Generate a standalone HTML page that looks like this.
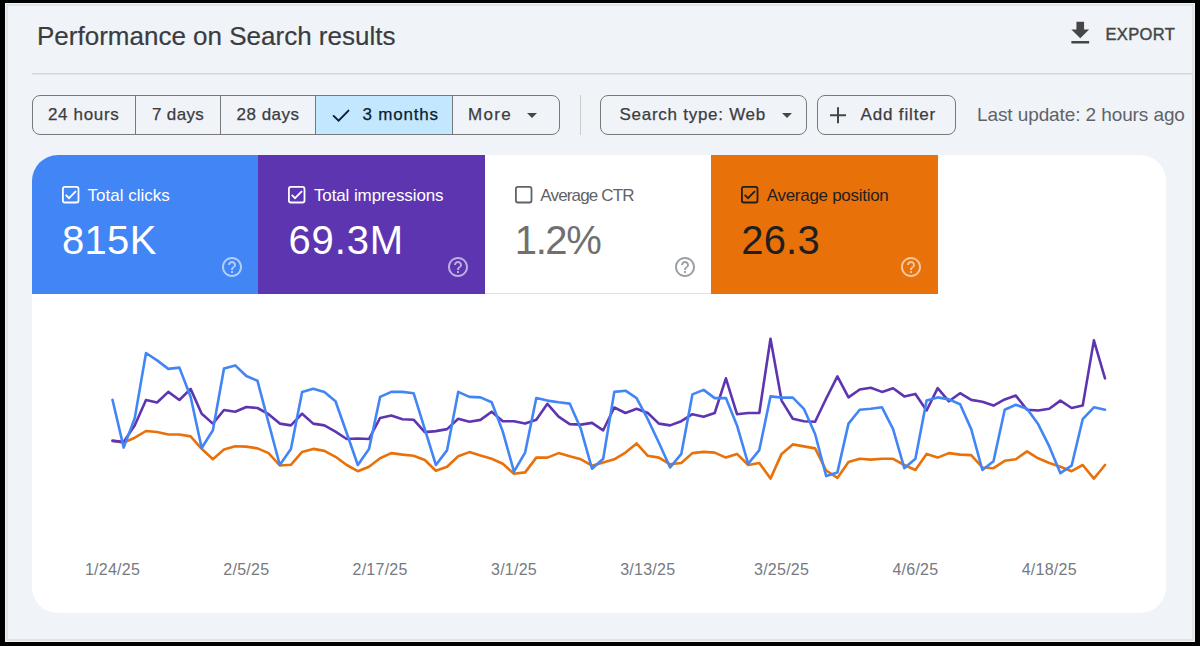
<!DOCTYPE html>
<html><head><meta charset="utf-8"><style>
*{box-sizing:border-box;margin:0;padding:0}
html,body{width:1200px;height:646px;overflow:hidden;background:#000;font-family:"Liberation Sans",sans-serif}
.frame{position:absolute;left:5px;top:3px;width:1190px;height:639px;background:#f2f2f2}
.inner{position:absolute;left:1px;top:1px;right:1px;bottom:1px;background:#f0f3f8;border:2px solid #e2e3e5}
.abs{position:absolute;white-space:nowrap;line-height:1}
.title{left:37px;font-size:26px;color:#3a3c3f;-webkit-text-stroke:0.2px #3a3c3f}
.export{left:1105.5px;font-size:16.5px;color:#444746;-webkit-text-stroke:0.45px #444746;letter-spacing:0.35px}
.hr{position:absolute;left:32px;top:73px;width:1161px;height:1px;background:#d2d5d9;box-shadow:0 1px 0 #e3e6ea}
.box{position:absolute;top:95px;height:40px;border:1px solid #79797b;border-radius:8px}
.sep{position:absolute;top:95px;width:1px;height:40px;background:#79797b}
.bt{position:absolute;top:106.1px;font-size:17px;line-height:1;color:#3c3c3f;-webkit-text-stroke:0.25px #3c3c3f;white-space:nowrap}
.vdiv{position:absolute;left:580px;top:95px;width:1px;height:40px;background:#c9cbcd}
.last{left:977px;top:104.5px;font-size:19px;color:#5f6368;letter-spacing:-0.1px}
.card{position:absolute;left:32px;top:155px;width:1134px;height:458px;background:#fff;border-radius:26px;overflow:hidden}
.m{position:absolute;top:0;width:227px;height:139px}
.m .cb{position:absolute;left:30px;top:31px;width:18px;height:18px}
.m .lbl{position:absolute;left:55.5px;top:32px;font-size:17px;line-height:1;white-space:nowrap}
.m .val{position:absolute;left:30px;top:65px;font-size:40px;line-height:1;white-space:nowrap}
.m .hq{position:absolute;left:188px;top:100px;width:24px;height:24px}
.xl{position:absolute;top:562px;width:120px;text-align:center;font-size:16px;line-height:1;color:#757a7f;letter-spacing:0.25px}
</style></head><body>
<div class="frame"><div class="inner"></div></div>
<div class="abs title" style="top:22.5px">Performance on Search results</div>
<svg class="abs" style="left:1065px;top:18px" width="30.5" height="30.5" viewBox="0 0 24 24"><path fill="#444746" d="M19 9h-4V3H9v6H5l7 7 7-7zM5 18v2h14v-2H5z"/></svg>
<div class="abs export" style="top:25.5px">EXPORT</div>
<div class="hr"></div>
<div style="position:absolute;left:315.5px;top:95px;width:137px;height:40px;background:#c2e7ff"></div>
<div class="box" style="left:32px;width:528px"></div>
<div class="sep" style="left:135px"></div>
<div class="sep" style="left:220px"></div>
<div class="sep" style="left:315px"></div>
<div class="sep" style="left:452px"></div>
<div class="bt" style="left:48px;letter-spacing:0.65px;">24 hours</div>
<div class="bt" style="left:152px;letter-spacing:0.34px;">7 days</div>
<div class="bt" style="left:236.5px;letter-spacing:0.5px;">28 days</div>
<svg class="abs" style="left:320px;top:100px" width="40" height="30" viewBox="320 100 40 30"><path fill="none" stroke="#0b1d30" stroke-width="1.9" stroke-linecap="round" d="M333.6 115.9L338.6 120.7L348.5 110.6"/></svg>
<div class="bt" style="left:362.5px;letter-spacing:0.8px;color:#0b1d30;-webkit-text-stroke:0.25px #0b1d30">3 months</div>
<div class="bt" style="left:468px;letter-spacing:1.3px;">More</div>
<div class="abs" style="left:527px;top:113px"><svg style="display:block" width="10" height="5" viewBox="0 0 10 5"><path fill="#444746" d="M0 0h10L5 5z"/></svg></div>
<div class="vdiv"></div>
<div class="box" style="left:600px;width:207px"></div>
<div class="bt" style="left:619.5px;letter-spacing:0.73px;">Search type: Web</div>
<div class="abs" style="left:782px;top:113px"><svg style="display:block" width="10" height="5" viewBox="0 0 10 5"><path fill="#444746" d="M0 0h10L5 5z"/></svg></div>
<div class="box" style="left:817px;width:139px"></div>
<svg class="abs" style="left:828.1px;top:104.5px" width="20" height="20" viewBox="0 0 20 20"><path fill="#444746" d="M9 2.2h2v16h-2zM2 9.2h16v2H2z"/></svg>
<div class="bt" style="left:860.5px;letter-spacing:0.85px;">Add filter</div>
<div class="abs last">Last update: 2 hours ago</div>
<div class="card">
 <div class="m" style="left:0;background:#4285f4;color:#fff"><div class="cb"><svg width="18" height="18" viewBox="0 0 18 18"><rect x="0.9" y="0.9" width="15.6" height="15.6" rx="2" fill="none" stroke="#fff" stroke-width="1.8"/><path d="M3.7 8.9 L7.0 12.2 L14.0 5.1" fill="none" stroke="#fff" stroke-width="1.8"/></svg></div><div class="lbl">Total clicks</div><div class="val" style="letter-spacing:0.3px">815K</div><div class="hq"><svg width="24" height="24" viewBox="0 0 24 24"><path fill="rgba(255,255,255,.6)" d="M11 18h2v-2h-2v2zm1-16C6.48 2 2 6.48 2 12s4.48 10 10 10 10-4.48 10-10S17.52 2 12 2zm0 18c-4.41 0-8-3.59-8-8s3.59-8 8-8 8 3.59 8 8-3.59 8-8 8zm0-14c-2.21 0-4 1.79-4 4h2c0-1.1.9-2 2-2s2 .9 2 2c0 2-3 1.75-3 5h2c0-2.25 3-2.5 3-5 0-2.21-1.79-4-4-4z"/></svg></div></div>
 <div class="m" style="left:226.4px;background:#5e35b1;color:#fff"><div class="cb"><svg width="18" height="18" viewBox="0 0 18 18"><rect x="0.9" y="0.9" width="15.6" height="15.6" rx="2" fill="none" stroke="#fff" stroke-width="1.8"/><path d="M3.7 8.9 L7.0 12.2 L14.0 5.1" fill="none" stroke="#fff" stroke-width="1.8"/></svg></div><div class="lbl" style="letter-spacing:-0.1px">Total impressions</div><div class="val" style="letter-spacing:0.9px">69.3M</div><div class="hq"><svg width="24" height="24" viewBox="0 0 24 24"><path fill="rgba(255,255,255,.6)" d="M11 18h2v-2h-2v2zm1-16C6.48 2 2 6.48 2 12s4.48 10 10 10 10-4.48 10-10S17.52 2 12 2zm0 18c-4.41 0-8-3.59-8-8s3.59-8 8-8 8 3.59 8 8-3.59 8-8 8zm0-14c-2.21 0-4 1.79-4 4h2c0-1.1.9-2 2-2s2 .9 2 2c0 2-3 1.75-3 5h2c0-2.25 3-2.5 3-5 0-2.21-1.79-4-4-4z"/></svg></div></div>
 <div class="m" style="left:452.8px;background:#fff;color:#5f6368;border-bottom:1px solid #e0e0e0"><div class="cb"><svg width="18" height="18" viewBox="0 0 18 18"><rect x="0.9" y="0.9" width="15.6" height="15.6" rx="2" fill="none" stroke="#5f6368" stroke-width="1.8"/></svg></div><div class="lbl" style="letter-spacing:-0.85px">Average CTR</div><div class="val" style="color:#707070;letter-spacing:-1.4px">1.2%</div><div class="hq"><svg width="24" height="24" viewBox="0 0 24 24"><path fill="#9aa0a6" d="M11 18h2v-2h-2v2zm1-16C6.48 2 2 6.48 2 12s4.48 10 10 10 10-4.48 10-10S17.52 2 12 2zm0 18c-4.41 0-8-3.59-8-8s3.59-8 8-8 8 3.59 8 8-3.59 8-8 8zm0-14c-2.21 0-4 1.79-4 4h2c0-1.1.9-2 2-2s2 .9 2 2c0 2-3 1.75-3 5h2c0-2.25 3-2.5 3-5 0-2.21-1.79-4-4-4z"/></svg></div></div>
 <div class="m" style="left:679.2px;width:227.3px;background:#e8710a;color:#1f1f1f"><div class="cb"><svg width="18" height="18" viewBox="0 0 18 18"><rect x="0.9" y="0.9" width="15.6" height="15.6" rx="2" fill="none" stroke="#1f1f1f" stroke-width="1.8"/><path d="M3.7 8.9 L7.0 12.2 L14.0 5.1" fill="none" stroke="#1f1f1f" stroke-width="1.8"/></svg></div><div class="lbl" style="letter-spacing:-0.28px">Average position</div><div class="val" style="letter-spacing:0.2px">26.3</div><div class="hq"><svg width="24" height="24" viewBox="0 0 24 24"><path fill="rgba(255,255,255,.6)" d="M11 18h2v-2h-2v2zm1-16C6.48 2 2 6.48 2 12s4.48 10 10 10 10-4.48 10-10S17.52 2 12 2zm0 18c-4.41 0-8-3.59-8-8s3.59-8 8-8 8 3.59 8 8-3.59 8-8 8zm0-14c-2.21 0-4 1.79-4 4h2c0-1.1.9-2 2-2s2 .9 2 2c0 2-3 1.75-3 5h2c0-2.25 3-2.5 3-5 0-2.21-1.79-4-4-4z"/></svg></div></div>
</div>
<svg class="abs" style="left:0;top:0" width="1200" height="646" viewBox="0 0 1200 646" fill="none" stroke-width="2.6" stroke-linejoin="round" stroke-linecap="round">
 <path stroke="#e8710a" d="M112.5,440.6 L123.7,442.6 L134.8,437.7 L146.0,431.0 L157.1,432.0 L168.3,434.5 L179.4,434.5 L190.6,436.4 L201.7,448.8 L212.9,459.2 L224.0,449.6 L235.2,446.3 L246.3,446.6 L257.5,448.4 L268.6,453.1 L279.8,465.5 L290.9,464.8 L302.1,451.9 L313.2,448.9 L324.4,450.9 L335.5,456.8 L346.7,465.0 L357.8,471.2 L369.0,466.7 L380.1,458.3 L391.3,453.1 L402.5,454.6 L413.6,455.8 L424.8,460.0 L435.9,470.7 L447.1,466.7 L458.2,456.3 L469.4,452.1 L480.5,455.6 L491.7,458.8 L502.8,463.8 L514.0,473.7 L525.1,472.4 L536.3,457.6 L547.4,457.6 L558.6,453.1 L569.7,456.3 L580.9,459.3 L592.0,465.7 L603.2,462.5 L614.3,459.3 L625.5,452.6 L636.6,443.4 L647.8,455.8 L658.9,457.6 L670.1,464.3 L681.3,463.0 L692.4,453.1 L703.6,451.9 L714.7,452.6 L725.9,457.6 L737.0,453.9 L748.2,465.0 L759.3,463.0 L770.5,478.6 L781.6,453.9 L792.8,444.4 L803.9,446.4 L815.1,448.4 L826.2,470.5 L837.4,477.9 L848.5,462.0 L859.7,458.8 L870.8,459.6 L882.0,458.8 L893.1,458.8 L904.3,465.0 L915.4,470.0 L926.6,453.9 L937.7,457.6 L948.9,453.1 L960.1,454.6 L971.2,455.1 L982.4,467.5 L993.5,468.2 L1004.7,460.8 L1015.8,459.3 L1027.0,451.4 L1038.1,458.3 L1049.3,463.0 L1060.4,466.7 L1071.6,471.2 L1082.7,465.0 L1093.9,478.6 L1105.0,465.0"/>
 <path stroke="#5e35b1" d="M112.5,440.9 L123.7,441.9 L134.8,425.3 L146.0,400.0 L157.1,402.5 L168.3,391.9 L179.4,400.0 L190.6,388.9 L201.7,413.7 L212.9,423.6 L224.0,410.0 L235.2,411.7 L246.3,407.0 L257.5,408.0 L268.6,414.2 L279.8,423.6 L290.9,425.4 L302.1,413.7 L313.2,423.6 L324.4,425.4 L335.5,431.6 L346.7,439.0 L357.8,438.5 L369.0,439.0 L380.1,417.9 L391.3,415.5 L402.5,419.2 L413.6,419.7 L424.8,432.1 L435.9,431.1 L447.1,429.1 L458.2,418.7 L469.4,421.7 L480.5,419.9 L491.7,411.7 L502.8,421.2 L514.0,421.2 L525.1,423.6 L536.3,419.7 L547.4,403.8 L558.6,416.7 L569.7,424.1 L580.9,424.6 L592.0,422.9 L603.2,430.3 L614.3,407.5 L625.5,413.0 L636.6,408.8 L647.8,413.0 L658.9,423.6 L670.1,425.4 L681.3,421.2 L692.4,414.2 L703.6,416.7 L714.7,413.0 L725.9,378.3 L737.0,414.2 L748.2,413.0 L759.3,413.0 L770.5,338.7 L781.6,400.6 L792.8,418.7 L803.9,421.2 L815.1,421.7 L826.2,398.5 L837.4,376.3 L848.5,397.4 L859.7,389.5 L870.8,387.7 L882.0,391.9 L893.1,388.2 L904.3,396.4 L915.4,393.9 L926.6,410.5 L937.7,388.2 L948.9,401.3 L960.1,393.2 L971.2,399.9 L982.4,401.8 L993.5,405.6 L1004.7,399.4 L1015.8,395.6 L1027.0,409.8 L1038.1,410.5 L1049.3,408.8 L1060.4,400.6 L1071.6,408.0 L1082.7,405.6 L1093.9,340.4 L1105.0,378.3"/>
 <path stroke="#4285f4" d="M112.5,399.8 L123.7,447.6 L134.8,417.9 L146.0,353.0 L157.1,360.4 L168.3,368.9 L179.4,367.6 L190.6,396.8 L201.7,448.0 L212.9,430.2 L224.0,368.4 L235.2,365.4 L246.3,376.0 L257.5,380.8 L268.6,422.9 L279.8,465.0 L290.9,448.9 L302.1,391.9 L313.2,388.7 L324.4,391.9 L335.5,401.3 L346.7,433.0 L357.8,465.0 L369.0,448.9 L380.1,396.9 L391.3,391.9 L402.5,391.9 L413.6,393.2 L424.8,429.1 L435.9,465.0 L447.1,450.1 L458.2,391.9 L469.4,396.9 L480.5,397.4 L491.7,402.3 L502.8,431.6 L514.0,471.7 L525.1,452.6 L536.3,398.1 L547.4,400.6 L558.6,402.3 L569.7,403.6 L580.9,429.1 L592.0,468.7 L603.2,458.8 L614.3,391.9 L625.5,390.7 L636.6,398.1 L647.8,419.2 L658.9,442.7 L670.1,467.5 L681.3,453.9 L692.4,394.4 L703.6,389.9 L714.7,398.1 L725.9,398.1 L737.0,425.4 L748.2,463.8 L759.3,450.1 L770.5,396.4 L781.6,397.6 L792.8,397.6 L803.9,408.8 L815.1,434.0 L826.2,476.1 L837.4,472.4 L848.5,423.6 L859.7,409.8 L870.8,408.8 L882.0,407.3 L893.1,429.1 L904.3,468.2 L915.4,458.8 L926.6,400.6 L937.7,397.4 L948.9,399.4 L960.1,404.3 L971.2,429.1 L982.4,470.0 L993.5,461.3 L1004.7,409.8 L1015.8,404.8 L1027.0,408.8 L1038.1,424.1 L1049.3,446.4 L1060.4,473.2 L1071.6,465.7 L1082.7,419.2 L1093.9,407.3 L1105.0,409.8"/>
</svg>
<div class="xl" style="left:52.5px">1/24/25</div><div class="xl" style="left:186.3px">2/5/25</div><div class="xl" style="left:320.1px">2/17/25</div><div class="xl" style="left:454.0px">3/1/25</div><div class="xl" style="left:587.8px">3/13/25</div><div class="xl" style="left:721.6px">3/25/25</div><div class="xl" style="left:855.4px">4/6/25</div><div class="xl" style="left:989.3px">4/18/25</div>
</body></html>
